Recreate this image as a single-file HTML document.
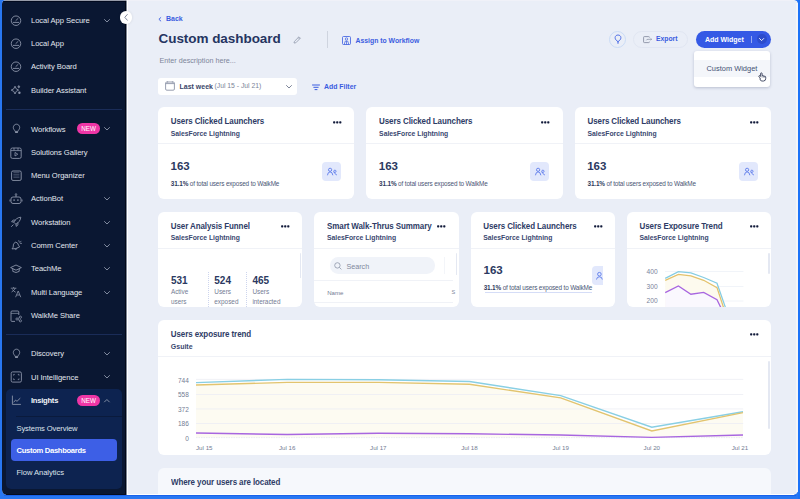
<!DOCTYPE html><html><head><meta charset="utf-8"><style>
*{box-sizing:border-box;margin:0;padding:0}
html,body{width:800px;height:499px;overflow:hidden;background:#2877f2;font-family:"Liberation Sans",sans-serif}
.a{position:absolute}
.t{position:absolute;white-space:nowrap;line-height:1}
.si{position:absolute;left:31px;font-size:7.6px;letter-spacing:-0.05px;color:#e3e7ef;white-space:nowrap;line-height:1}
.card{position:absolute;background:#fff;border-radius:6px}
.ct{position:absolute;font-size:8px;letter-spacing:-0.1px;font-weight:700;color:#2e3c66;white-space:nowrap;line-height:1;transform:scaleY(1.12);transform-origin:0 85%}
.cs{position:absolute;font-size:6.8px;font-weight:700;color:#3a4870;white-space:nowrap;line-height:1}
.hsep{position:absolute;height:1px;background:#f0f2f7}
svg{position:absolute;overflow:visible}
</style></head><body>
<div class="a" style="left:2px;top:0;width:796px;height:495px;background:#eaeef7;border-radius:0 4px 5px 5px;overflow:hidden"></div>
<div class="a" style="left:2px;top:0px;width:124px;height:495px;background:#0a1732;border-radius:4px 0 0 5px"></div>
<div class="a" style="left:4px;top:1px;width:122px;height:1px;background:#020a1f"></div>
<div class="a" style="left:125px;top:0;width:1px;height:495px;background:#020817"></div>
<div class="a" style="left:126px;top:0;width:1px;height:495px;background:#7d8595"></div>
<div class="a" style="left:127px;top:0;width:1px;height:495px;background:#ffffff"></div>
<div class="a" style="left:4px;top:0;width:791px;height:1px;background:rgba(243,244,248,0.6)"></div>
<div class="si" style="top:16.85px">Local App Secure</div>
<svg style="left:10px;top:14.55px" width="12" height="12"><circle cx="6" cy="5.7" r="4.75" fill="none" stroke="#8a93a8" stroke-width="0.9"/><path d="M3.2 7.4 H8.8 M5.9 5.5 L8 3.5" stroke="#8a93a8" stroke-width="0.9" fill="none" stroke-linecap="round"/></svg>
<svg style="left:103.8px;top:18.75px" width="6" height="3.5"><path d="M0.5 0.5 L3.0 3.0 L5.5 0.5" fill="none" stroke="#8f98ad" stroke-width="0.9" stroke-linecap="round" stroke-linejoin="round"/></svg>
<div class="si" style="top:40.15px">Local App</div>
<svg style="left:10px;top:37.85px" width="12" height="12"><circle cx="6" cy="5.7" r="4.75" fill="none" stroke="#8a93a8" stroke-width="0.9"/><path d="M3.2 7.4 H8.8 M5.9 5.5 L8 3.5" stroke="#8a93a8" stroke-width="0.9" fill="none" stroke-linecap="round"/></svg>
<div class="si" style="top:63.45px">Activity Board</div>
<svg style="left:10px;top:61.15px" width="12" height="12"><circle cx="6" cy="5.7" r="4.75" fill="none" stroke="#8a93a8" stroke-width="0.9"/><path d="M3.2 7.4 H8.8 M5.9 5.5 L8 3.5" stroke="#8a93a8" stroke-width="0.9" fill="none" stroke-linecap="round"/></svg>
<div class="si" style="top:86.75px">Builder Assistant</div>
<svg style="left:10px;top:84.45px" width="12" height="12"><path d="M5 2.2 Q5.6 5.5 8.6 6.1 Q5.6 6.7 5 10 Q4.4 6.7 1.2 6.1 Q4.4 5.5 5 2.2Z" fill="none" stroke="#8a93a8" stroke-width="0.9" stroke-linejoin="round"/><path d="M8.8 1 L10.3 2.7 L8.8 4.4 L7.3 2.7Z" fill="#8a93a8" opacity="0.85"/><circle cx="9.4" cy="8.8" r="1.2" fill="#8a93a8"/></svg>
<div class="si" style="top:125.55px">Workflows</div>
<svg style="left:10px;top:123.25px" width="12" height="12"><path d="M5 8.4 C4.8 7.1 3.3 6.3 3.3 4.6 C3.3 2.7 4.7 1.2 6.5 1.2 C8.3 1.2 9.7 2.7 9.7 4.6 C9.7 6.3 8.2 7.1 8 8.4Z" fill="none" stroke="#8a93a8" stroke-width="0.9" stroke-linejoin="round"/><rect x="5.1" y="8.8" width="2.8" height="1.3" rx="0.3" fill="#8a93a8"/></svg>
<svg style="left:103.8px;top:127.45px" width="6" height="3.5"><path d="M0.5 0.5 L3.0 3.0 L5.5 0.5" fill="none" stroke="#8f98ad" stroke-width="0.9" stroke-linecap="round" stroke-linejoin="round"/></svg>
<div class="si" style="top:148.85px">Solutions Gallery</div>
<svg style="left:10px;top:146.55px" width="12" height="12"><rect x="0.8" y="1" width="10.4" height="10.4" rx="1.6" fill="none" stroke="#8a93a8" stroke-width="0.9"/><path d="M0.8 3.6 H11.2 M4 1 V3.6 M8 1 V3.6" stroke="#8a93a8" stroke-width="0.8"/><path d="M5 5.4 L7.8 7.2 L5 9Z" fill="none" stroke="#8a93a8" stroke-width="0.8"/></svg>
<div class="si" style="top:172.15px">Menu Organizer</div>
<svg style="left:10px;top:169.85px" width="12" height="12"><rect x="1.6" y="1" width="9.6" height="9.4" rx="1.3" fill="none" stroke="#8a93a8" stroke-width="0.95"/><path d="M3.4 2.6 H9.4 M3.4 4.3 H9.4 M3.4 6 H9.4 M3.4 7.7 H9.4" stroke="#8a93a8" stroke-width="0.55" opacity="0.8"/><path d="M3.2 9 H9.6" stroke="#050d20" stroke-width="0.8"/></svg>
<div class="si" style="top:195.45px">ActionBot</div>
<svg style="left:10px;top:193.15px" width="12" height="12"><rect x="1" y="4" width="10" height="6.5" rx="2" fill="none" stroke="#8a93a8" stroke-width="0.9"/><path d="M6 4 V1.8" stroke="#8a93a8" stroke-width="0.9"/><circle cx="6" cy="1.4" r="0.8" fill="none" stroke="#8a93a8" stroke-width="0.7"/><rect x="3.4" y="6.4" width="1.4" height="1.4" fill="#8a93a8"/><rect x="7.2" y="6.4" width="1.4" height="1.4" fill="#8a93a8"/><path d="M0 6.5 V8.5 M12 6.5 V8.5" stroke="#8a93a8" stroke-width="0.9"/></svg>
<svg style="left:103.8px;top:197.35px" width="6" height="3.5"><path d="M0.5 0.5 L3.0 3.0 L5.5 0.5" fill="none" stroke="#8f98ad" stroke-width="0.9" stroke-linecap="round" stroke-linejoin="round"/></svg>
<div class="si" style="top:218.75px">Workstation</div>
<svg style="left:10px;top:216.45px" width="12" height="12"><path d="M10.8 1.2 C7.5 1.4 5.2 3.6 3.8 6.2 L5.8 8.2 C8.4 6.8 10.6 4.5 10.8 1.2Z" fill="none" stroke="#8a93a8" stroke-width="0.9" stroke-linejoin="round"/><path d="M4 6 L1.6 5.8 L3.2 4 L5.4 4.2 M6 8 L6.2 10.4 L8 8.8 L7.8 6.6 M3.4 8.6 L1.2 10.8" fill="none" stroke="#8a93a8" stroke-width="0.9" stroke-linejoin="round"/></svg>
<svg style="left:103.8px;top:220.65px" width="6" height="3.5"><path d="M0.5 0.5 L3.0 3.0 L5.5 0.5" fill="none" stroke="#8f98ad" stroke-width="0.9" stroke-linecap="round" stroke-linejoin="round"/></svg>
<div class="si" style="top:242.05px">Comm Center</div>
<svg style="left:10px;top:239.75px" width="12" height="12"><path d="M5.4 2 Q8 2.4 8.5 5.2 L9.6 6.9 Q6 9.2 2 8.9 L3.1 7.3 Q2.8 3.6 5.4 2Z" fill="none" stroke="#8a93a8" stroke-width="0.9" stroke-linejoin="round"/><path d="M4.6 8.9 Q5.8 10.4 7.3 8.3" fill="none" stroke="#8a93a8" stroke-width="0.85"/><path d="M8.8 0.6 L9.2 1.9 M11 1.2 L10 2.4 M11.6 3.4 L10.3 3.4" stroke="#8a93a8" stroke-width="0.75" stroke-linecap="round"/></svg>
<svg style="left:103.8px;top:243.95px" width="6" height="3.5"><path d="M0.5 0.5 L3.0 3.0 L5.5 0.5" fill="none" stroke="#8f98ad" stroke-width="0.9" stroke-linecap="round" stroke-linejoin="round"/></svg>
<div class="si" style="top:265.35px">TeachMe</div>
<svg style="left:10px;top:263.05px" width="12" height="12"><path d="M0.6 4.6 L6 2 L11.4 4.6 L6 7.2Z" fill="none" stroke="#8a93a8" stroke-width="0.9" stroke-linejoin="round"/><path d="M2.8 5.8 V8.4 Q6 10.6 9.2 8.4 V5.8" fill="none" stroke="#8a93a8" stroke-width="0.9"/></svg>
<svg style="left:103.8px;top:267.25px" width="6" height="3.5"><path d="M0.5 0.5 L3.0 3.0 L5.5 0.5" fill="none" stroke="#8f98ad" stroke-width="0.9" stroke-linecap="round" stroke-linejoin="round"/></svg>
<div class="si" style="top:288.65px">Multi Language</div>
<svg style="left:10px;top:286.35px" width="12" height="12"><path d="M0.8 2.2 H6.4 M3.6 1 V2.2 M1.6 6 C3.4 5 4.8 3.4 5.2 2.2 M2.4 3.4 C3 4.6 4.2 5.6 5.6 6.2" fill="none" stroke="#8a93a8" stroke-width="0.8"/><path d="M5.6 11.2 L8.2 5 L10.8 11.2 M6.6 9 H9.8" fill="none" stroke="#8a93a8" stroke-width="0.8"/></svg>
<svg style="left:103.8px;top:290.55px" width="6" height="3.5"><path d="M0.5 0.5 L3.0 3.0 L5.5 0.5" fill="none" stroke="#8f98ad" stroke-width="0.9" stroke-linecap="round" stroke-linejoin="round"/></svg>
<div class="si" style="top:311.95px">WalkMe Share</div>
<svg style="left:10px;top:309.65px" width="12" height="12"><path d="M8.8 5 V2 Q8.8 1 7.8 1 H2 Q1 1 1 2 V10.6 Q1 11.4 2 11.4 H5" fill="none" stroke="#8a93a8" stroke-width="0.9"/><path d="M1 3.4 H8.8" stroke="#8a93a8" stroke-width="0.7"/><circle cx="7" cy="9" r="1.1" fill="none" stroke="#8a93a8" stroke-width="0.8"/><circle cx="10.4" cy="7.2" r="1.1" fill="none" stroke="#8a93a8" stroke-width="0.8"/><circle cx="10.4" cy="10.8" r="1.1" fill="none" stroke="#8a93a8" stroke-width="0.8"/><path d="M8 8.5 L9.4 7.7 M8 9.5 L9.4 10.3" stroke="#8a93a8" stroke-width="0.7"/></svg>
<div class="si" style="top:350.25px">Discovery</div>
<svg style="left:10px;top:347.95px" width="12" height="12"><path d="M5 8.4 C4.8 7.1 3.3 6.3 3.3 4.6 C3.3 2.7 4.7 1.2 6.5 1.2 C8.3 1.2 9.7 2.7 9.7 4.6 C9.7 6.3 8.2 7.1 8 8.4Z" fill="none" stroke="#8a93a8" stroke-width="0.9" stroke-linejoin="round"/><rect x="5.1" y="8.8" width="2.8" height="1.3" rx="0.3" fill="#8a93a8"/></svg>
<svg style="left:103.8px;top:352.15px" width="6" height="3.5"><path d="M0.5 0.5 L3.0 3.0 L5.5 0.5" fill="none" stroke="#8f98ad" stroke-width="0.9" stroke-linecap="round" stroke-linejoin="round"/></svg>
<div class="si" style="top:373.55px">UI Intelligence</div>
<svg style="left:10px;top:371.25px" width="12" height="12"><rect x="1.2" y="0.9" width="10.2" height="10.2" rx="1.4" fill="none" stroke="#8a93a8" stroke-width="0.9"/><path d="M3.6 3.4 V4.6 M3.6 3.4 H4.8 M9 3.4 V4.6 M9 3.4 H7.8 M3.6 8.6 V7.4 M3.6 8.6 H4.8 M9 8.6 V7.4 M9 8.6 H7.8" fill="none" stroke="#8a93a8" stroke-width="0.75"/></svg>
<svg style="left:103.8px;top:375.45px" width="6" height="3.5"><path d="M0.5 0.5 L3.0 3.0 L5.5 0.5" fill="none" stroke="#8f98ad" stroke-width="0.9" stroke-linecap="round" stroke-linejoin="round"/></svg>
<div class="a" style="left:6px;top:109px;width:116px;height:1px;background:#1a2c58"></div>
<div class="a" style="left:6px;top:334px;width:116px;height:1px;background:#1a2c58"></div>
<div class="t" style="left:77px;top:123.3px;width:23px;height:10.6px;border-radius:5.3px;background:#ef36a6;color:#fff;font-size:6.3px;line-height:11.7px;text-align:center">NEW</div>
<div class="a" style="left:6px;top:388.5px;width:116px;height:100.5px;background:#0d2350;border-radius:5px"></div>
<div class="a" style="left:16px;top:416px;width:106px;height:1px;background:#0a1a3c"></div>
<div class="si" style="top:396.8px;font-weight:700;letter-spacing:-0.25px;color:#f2f4f8">Insights</div>
<svg style="left:10px;top:394.2px" width="12" height="12"><path d="M2.4 1.6 V10.4 H10.9" fill="none" stroke="#8a93a8" stroke-width="0.9"/><path d="M3.9 8 L5.5 6.1 L7 7.3 L10 4.4" fill="none" stroke="#8a93a8" stroke-width="0.9" stroke-linejoin="round" stroke-linecap="round"/></svg>
<div class="t" style="left:77px;top:394.9px;width:23px;height:10.9px;border-radius:5.45px;background:#ef36a6;color:#fff;font-size:6.3px;line-height:12.0px;text-align:center">NEW</div>
<svg style="left:103.9px;top:398.5px" width="5.8" height="3.4"><path d="M0.5 2.9 L2.9 0.5 L5.3 2.9" fill="none" stroke="#8f98ad" stroke-width="0.9" stroke-linecap="round" stroke-linejoin="round"/></svg>
<div class="si" style="left:16.5px;top:424.8px;letter-spacing:-0.12px;color:#dfe3ec">Systems Overview</div>
<div class="a" style="left:11px;top:439.1px;width:106px;height:21.9px;background:#3d5fe6;border-radius:4px"></div>
<div class="si" style="left:16.5px;top:447.1px;color:#ffffff;letter-spacing:-0.3px;font-weight:700">Custom Dashboards</div>
<div class="si" style="left:16.5px;top:469.1px;color:#dfe3ec">Flow Analytics</div>
<div class="a" style="left:119.7px;top:10.9px;width:12.8px;height:12.8px;border-radius:6.4px;background:#fff;box-shadow:0 0 3px rgba(0,0,0,0.10)"></div>
<svg style="left:124px;top:13.9px" width="4" height="7"><path d="M3.3 0.5 L0.8 3.35 L3.3 6.2" fill="none" stroke="#707a90" stroke-width="0.9" stroke-linecap="round"/></svg>
<svg style="left:158.2px;top:16.6px" width="4" height="5"><path d="M2.8 0.6 L0.9 2.3 L2.8 4" fill="none" stroke="#3a5ce0" stroke-width="0.9" stroke-linecap="round"/></svg>
<div class="t" style="left:166px;top:14.5px;font-size:7px;font-weight:700;color:#3a5ce0">Back</div>
<div class="t" style="left:158.5px;top:31.5px;font-size:13.5px;font-weight:700;color:#253461;letter-spacing:-0.05px">Custom dashboard</div>
<svg style="left:293.3px;top:35.6px" width="9" height="8"><path d="M1 7 L1.4 5.4 L6 0.8 L7.4 2.2 L2.8 6.8Z M5.2 1.6 L6.6 3" fill="none" stroke="#9aa1b3" stroke-width="0.9" stroke-linejoin="round"/></svg>
<div class="a" style="left:327px;top:31px;width:1px;height:17px;background:#cfd4df"></div>
<svg style="left:342px;top:36.3px" width="9" height="9"><rect x="0.5" y="0.5" width="8" height="8" rx="1" fill="none" stroke="#3a5ce0" stroke-width="0.8"/><circle cx="4.5" cy="3" r="1.2" fill="none" stroke="#3a5ce0" stroke-width="0.7"/><path d="M2.2 8.5 L3.2 5.2 H5.8 L6.8 8.5 M4.5 5.2 V8.5" fill="none" stroke="#3a5ce0" stroke-width="0.7"/></svg>
<div class="t" style="left:355.5px;top:37.5px;font-size:6.85px;font-weight:700;color:#3a5ce0">Assign to Workflow</div>
<div class="t" style="left:159.5px;top:56.5px;font-size:7.2px;color:#7d8599">Enter description here...</div>
<div class="a" style="left:158px;top:78px;width:139px;height:16.5px;background:#fff;border-radius:3px"></div>
<svg style="left:165.3px;top:81.2px" width="10" height="10"><rect x="0.6" y="1" width="8.8" height="8.2" rx="1.2" fill="none" stroke="#7e879c" stroke-width="0.8"/><path d="M0.6 2.6 H9.4" stroke="#7e879c" stroke-width="0.8"/><path d="M2.6 0.3 V1.6 M7.4 0.3 V1.6" stroke="#7e879c" stroke-width="0.7"/></svg>
<div class="t" style="left:179.5px;top:83px;font-size:7px;font-weight:700;color:#3a4669">Last week</div>
<div class="t" style="left:214.5px;top:83px;font-size:6.8px;color:#7d8599">(Jul 15 - Jul 21)</div>
<svg style="left:286px;top:84.8px" width="6" height="3.5"><path d="M0.5 0.5 L3.0 3.0 L5.5 0.5" fill="none" stroke="#6d768c" stroke-width="0.9" stroke-linecap="round" stroke-linejoin="round"/></svg>
<svg style="left:311.5px;top:83.5px" width="8" height="7"><path d="M0.5 1 H7.5 M1.8 3.3 H6.2 M3 5.6 H5" stroke="#3a5ce0" stroke-width="1" stroke-linecap="round"/></svg>
<div class="t" style="left:324px;top:83.6px;font-size:6.9px;font-weight:700;color:#3a5ce0">Add Filter</div>
<div class="a" style="left:609px;top:30.6px;width:17px;height:17.2px;border-radius:8.6px;border:0.8px solid #cbdcf6"></div>
<svg style="left:613px;top:34px" width="10" height="11"><path d="M5 7.6 C3.4 6.6 2.1 5.4 2.1 3.7 C2.1 2.1 3.4 1 5 1 C6.6 1 7.9 2.1 7.9 3.7 C7.9 5.4 6.6 6.6 5 7.6Z" fill="none" stroke="#4d6de6" stroke-width="0.95" stroke-linejoin="round"/><path d="M5 7.6 V9.2" stroke="#4d6de6" stroke-width="1.2" stroke-linecap="round"/></svg>
<div class="a" style="left:632.5px;top:30.6px;width:55.5px;height:17.2px;border-radius:8.6px;border:0.8px solid #e1e6f2"></div>
<svg style="left:643px;top:35.6px" width="10" height="8"><path d="M6.4 1.6 V1.3 Q6.4 0.6 5.7 0.6 H1.3 Q0.6 0.6 0.6 1.3 V5.9 Q0.6 6.6 1.3 6.6 H5.7 Q6.4 6.6 6.4 5.9 V5.6" fill="none" stroke="#8a91a4" stroke-width="0.9"/><path d="M3.2 4.4 Q3.6 3.3 5 3.3 H8.6 M7.6 2.4 L8.6 3.3 L7.6 4.2" fill="none" stroke="#8a91a4" stroke-width="0.75"/></svg>
<div class="t" style="left:656px;top:36px;font-size:6.8px;font-weight:700;color:#3a5ce0">Export</div>
<div class="a" style="left:696px;top:30.5px;width:75px;height:17px;border-radius:8.5px;background:#3559e5"></div>
<div class="t" style="left:705px;top:35.8px;font-size:7px;font-weight:700;color:#fff">Add Widget</div>
<div class="a" style="left:751.3px;top:35.5px;width:0.9px;height:7px;background:#98abf2"></div>
<div class="a" style="left:756.8px;top:34.2px;width:9.8px;height:9.8px;border-radius:4.9px;background:#2d4ccc"></div>
<svg style="left:759.4px;top:38.1px" width="5.2" height="3.1"><path d="M0.5 0.5 L2.6 2.6 L4.7 0.5" fill="none" stroke="#ffffff" stroke-width="0.9" stroke-linecap="round" stroke-linejoin="round"/></svg>
<div class="a" style="left:694px;top:50.5px;width:76px;height:36px;background:#fff;border-radius:3px;box-shadow:0 1px 3px rgba(40,50,90,0.25)"></div>
<div class="a" style="left:694px;top:59.9px;width:76px;height:17px;background:#f4f6fa"></div>
<div class="t" style="left:706.5px;top:65px;font-size:7.45px;color:#465274">Custom Widget</div>
<svg style="left:757.6px;top:71.6px" width="10" height="10"><g transform="scale(0.82)"><path d="M2.6 7.2 L1.3 6 Q0.6 5.3 1.2 4.7 Q1.9 4.1 2.6 4.8 L3.2 5.4 V2 Q3.2 1 4.1 1 Q5 1 5 2 V4.4 Q6 4 6.6 4.7 Q7.6 4.4 8 5.2 Q9.2 5 9.4 6.2 V8 Q9.4 10.8 6.8 11 H5 Q3.6 11 2.6 9.6Z" fill="#fff" stroke="#2a3350" stroke-width="1.05" stroke-linejoin="round"/><path d="M5 4.6 V6.8 M6.6 4.8 V6.8 M8 5.3 V6.8" stroke="#2a3350" stroke-width="0.6"/></g></svg>
<div class="card" style="left:158px;top:107px;width:196.3px;height:92px"></div>
<div class="ct" style="left:170.8px;top:118.3px">Users Clicked Launchers</div>
<div class="cs" style="left:170.8px;top:130.6px">SalesForce Lightning</div>
<svg style="left:333px;top:120.8px" width="9" height="3"><rect x="0.1" y="0.2" width="2.2" height="2.2" rx="0.7" fill="#111a3a"/><rect x="3.15" y="0.2" width="2.2" height="2.2" rx="0.7" fill="#111a3a"/><rect x="6.199999999999999" y="0.2" width="2.2" height="2.2" rx="0.7" fill="#111a3a"/></svg>
<div class="hsep" style="left:158px;top:143px;width:196.3px"></div>
<div class="t" style="left:170.5px;top:160.5px;font-size:11.5px;font-weight:700;color:#2b3961">163</div>
<div class="t" style="left:170.8px;top:181px;font-size:6.4px;letter-spacing:-0.15px;color:#4a5675"><b style="color:#2f3b5e">31.1%</b> of total users exposed to WalkMe</div>
<div class="a" style="left:322px;top:162.3px;width:19px;height:19px;border-radius:4px;background:#e2e8fc"></div>
<svg style="left:327px;top:168px" width="11" height="8"><circle cx="3.1" cy="1.8" r="1.6" fill="none" stroke="#5675ea" stroke-width="0.85"/><path d="M0.5 6.9 Q0.8 3.9 3.1 3.9 Q5.4 3.9 5.8 6.9" fill="none" stroke="#5675ea" stroke-width="0.85" stroke-linecap="round"/><circle cx="7.9" cy="3.3" r="1.15" fill="none" stroke="#5675ea" stroke-width="0.8"/><path d="M6.9 4.2 Q7.6 5.9 9.6 6.9" fill="none" stroke="#5675ea" stroke-width="0.8" stroke-linecap="round"/></svg>
<div class="card" style="left:366.3px;top:107px;width:196.3px;height:92px"></div>
<div class="ct" style="left:379.1px;top:118.3px">Users Clicked Launchers</div>
<div class="cs" style="left:379.1px;top:130.6px">SalesForce Lightning</div>
<svg style="left:541.3px;top:120.8px" width="9" height="3"><rect x="0.1" y="0.2" width="2.2" height="2.2" rx="0.7" fill="#111a3a"/><rect x="3.15" y="0.2" width="2.2" height="2.2" rx="0.7" fill="#111a3a"/><rect x="6.199999999999999" y="0.2" width="2.2" height="2.2" rx="0.7" fill="#111a3a"/></svg>
<div class="hsep" style="left:366.3px;top:143px;width:196.3px"></div>
<div class="t" style="left:378.8px;top:160.5px;font-size:11.5px;font-weight:700;color:#2b3961">163</div>
<div class="t" style="left:379.1px;top:181px;font-size:6.4px;letter-spacing:-0.15px;color:#4a5675"><b style="color:#2f3b5e">31.1%</b> of total users exposed to WalkMe</div>
<div class="a" style="left:530.3px;top:162.3px;width:19px;height:19px;border-radius:4px;background:#e2e8fc"></div>
<svg style="left:535.3px;top:168px" width="11" height="8"><circle cx="3.1" cy="1.8" r="1.6" fill="none" stroke="#5675ea" stroke-width="0.85"/><path d="M0.5 6.9 Q0.8 3.9 3.1 3.9 Q5.4 3.9 5.8 6.9" fill="none" stroke="#5675ea" stroke-width="0.85" stroke-linecap="round"/><circle cx="7.9" cy="3.3" r="1.15" fill="none" stroke="#5675ea" stroke-width="0.8"/><path d="M6.9 4.2 Q7.6 5.9 9.6 6.9" fill="none" stroke="#5675ea" stroke-width="0.8" stroke-linecap="round"/></svg>
<div class="card" style="left:574.7px;top:107px;width:196.3px;height:92px"></div>
<div class="ct" style="left:587.5px;top:118.3px">Users Clicked Launchers</div>
<div class="cs" style="left:587.5px;top:130.6px">SalesForce Lightning</div>
<svg style="left:749.7px;top:120.8px" width="9" height="3"><rect x="0.1" y="0.2" width="2.2" height="2.2" rx="0.7" fill="#111a3a"/><rect x="3.15" y="0.2" width="2.2" height="2.2" rx="0.7" fill="#111a3a"/><rect x="6.199999999999999" y="0.2" width="2.2" height="2.2" rx="0.7" fill="#111a3a"/></svg>
<div class="hsep" style="left:574.7px;top:143px;width:196.3px"></div>
<div class="t" style="left:587.2px;top:160.5px;font-size:11.5px;font-weight:700;color:#2b3961">163</div>
<div class="t" style="left:587.5px;top:181px;font-size:6.4px;letter-spacing:-0.15px;color:#4a5675"><b style="color:#2f3b5e">31.1%</b> of total users exposed to WalkMe</div>
<div class="a" style="left:738.7px;top:162.3px;width:19px;height:19px;border-radius:4px;background:#e2e8fc"></div>
<svg style="left:743.7px;top:168px" width="11" height="8"><circle cx="3.1" cy="1.8" r="1.6" fill="none" stroke="#5675ea" stroke-width="0.85"/><path d="M0.5 6.9 Q0.8 3.9 3.1 3.9 Q5.4 3.9 5.8 6.9" fill="none" stroke="#5675ea" stroke-width="0.85" stroke-linecap="round"/><circle cx="7.9" cy="3.3" r="1.15" fill="none" stroke="#5675ea" stroke-width="0.8"/><path d="M6.9 4.2 Q7.6 5.9 9.6 6.9" fill="none" stroke="#5675ea" stroke-width="0.8" stroke-linecap="round"/></svg>
<div class="card" style="left:158px;top:211.5px;width:144.25px;height:95.5px;overflow:hidden"></div>
<div class="ct" style="left:170.8px;top:223.1px">User Analysis Funnel</div>
<div class="cs" style="left:170.8px;top:234.9px">SalesForce Lightning</div>
<svg style="left:281px;top:225px" width="9" height="3"><rect x="0.1" y="0.2" width="2.2" height="2.2" rx="0.7" fill="#111a3a"/><rect x="3.15" y="0.2" width="2.2" height="2.2" rx="0.7" fill="#111a3a"/><rect x="6.199999999999999" y="0.2" width="2.2" height="2.2" rx="0.7" fill="#111a3a"/></svg>
<div class="hsep" style="left:158px;top:247.5px;width:144.25px"></div>
<div class="a" style="left:299.5px;top:252.5px;width:1.6px;height:25px;background:#e4e8f2;border-radius:1px"></div>
<div class="card" style="left:314.25px;top:211.5px;width:144.25px;height:95.5px;overflow:hidden"></div>
<div class="ct" style="left:327.05px;top:223.1px">Smart Walk-Thrus Summary</div>
<div class="cs" style="left:327.05px;top:234.9px">SalesForce Lightning</div>
<svg style="left:437.2px;top:225px" width="9" height="3"><rect x="0.1" y="0.2" width="2.2" height="2.2" rx="0.7" fill="#111a3a"/><rect x="3.15" y="0.2" width="2.2" height="2.2" rx="0.7" fill="#111a3a"/><rect x="6.199999999999999" y="0.2" width="2.2" height="2.2" rx="0.7" fill="#111a3a"/></svg>
<div class="hsep" style="left:314.25px;top:247.5px;width:144.25px"></div>
<div class="a" style="left:455.75px;top:252.5px;width:1.6px;height:22px;background:#e4e8f2;border-radius:1px"></div>
<div class="card" style="left:470.5px;top:211.5px;width:144.25px;height:95.5px;overflow:hidden"></div>
<div class="ct" style="left:483.3px;top:223.1px">Users Clicked Launchers</div>
<div class="cs" style="left:483.3px;top:234.9px">SalesForce Lightning</div>
<svg style="left:593.5px;top:225px" width="9" height="3"><rect x="0.1" y="0.2" width="2.2" height="2.2" rx="0.7" fill="#111a3a"/><rect x="3.15" y="0.2" width="2.2" height="2.2" rx="0.7" fill="#111a3a"/><rect x="6.199999999999999" y="0.2" width="2.2" height="2.2" rx="0.7" fill="#111a3a"/></svg>
<div class="hsep" style="left:470.5px;top:247.5px;width:144.25px"></div>
<div class="card" style="left:626.75px;top:211.5px;width:144.25px;height:95.5px;overflow:hidden"></div>
<div class="ct" style="left:639.55px;top:223.1px">Users Exposure Trend</div>
<div class="cs" style="left:639.55px;top:234.9px">SalesForce Lightning</div>
<svg style="left:749.8px;top:225px" width="9" height="3"><rect x="0.1" y="0.2" width="2.2" height="2.2" rx="0.7" fill="#111a3a"/><rect x="3.15" y="0.2" width="2.2" height="2.2" rx="0.7" fill="#111a3a"/><rect x="6.199999999999999" y="0.2" width="2.2" height="2.2" rx="0.7" fill="#111a3a"/></svg>
<div class="hsep" style="left:626.75px;top:247.5px;width:144.25px"></div>
<div class="a" style="left:768.25px;top:252.5px;width:1.6px;height:21px;background:#e4e8f2;border-radius:1px"></div>
<div class="t" style="left:170.9px;top:275.7px;font-size:10px;font-weight:700;color:#2b3961">531</div>
<div class="t" style="left:170.9px;top:289.2px;font-size:6.4px;color:#737c94">Active</div>
<div class="t" style="left:170.9px;top:298.6px;font-size:6.4px;color:#737c94">users</div>
<div class="t" style="left:214.3px;top:275.7px;font-size:10px;font-weight:700;color:#2b3961">524</div>
<div class="t" style="left:214.3px;top:289.2px;font-size:6.4px;color:#737c94">Users</div>
<div class="t" style="left:214.3px;top:298.6px;font-size:6.4px;color:#737c94">exposed</div>
<div class="t" style="left:252.4px;top:275.7px;font-size:10px;font-weight:700;color:#2b3961">465</div>
<div class="t" style="left:252.4px;top:289.2px;font-size:6.4px;color:#737c94">Users</div>
<div class="t" style="left:252.4px;top:298.6px;font-size:6.4px;color:#737c94">interacted</div>
<div class="a" style="left:207.7px;top:272px;width:0;height:35px;border-left:1px dotted #cdd5ee"></div>
<div class="a" style="left:245.8px;top:272px;width:0;height:35px;border-left:1px dotted #cdd5ee"></div>
<div class="a" style="left:329.8px;top:257.2px;width:105.4px;height:16.5px;border-radius:8.25px;background:#f0f3f9"></div>
<svg style="left:334px;top:261.5px" width="8" height="8"><circle cx="3.4" cy="3.4" r="2.7" fill="none" stroke="#8d95a8" stroke-width="0.8"/><path d="M5.4 5.4 L7.4 7.4" stroke="#8d95a8" stroke-width="0.8"/></svg>
<div class="t" style="left:346.4px;top:263.3px;font-size:7.2px;color:#7f879c">Search</div>
<div class="a" style="left:444.3px;top:257px;width:0.6px;height:17px;background:#f3f5f9"></div>
<div class="hsep" style="left:314.25px;top:280.4px;width:139px"></div>
<div class="t" style="left:327.2px;top:290px;font-size:6.1px;color:#737c94">Name</div>
<div class="t" style="left:451.5px;top:290.3px;font-size:5.6px;color:#7d869b">S</div>
<div class="hsep" style="left:314.25px;top:301.5px;width:139px"></div>
<div class="t" style="left:483.5px;top:264.5px;font-size:11.5px;font-weight:700;color:#2b3961">163</div>
<div class="t" style="left:483.7px;top:284.6px;font-size:6.4px;letter-spacing:-0.15px;color:#4a5675"><b style="color:#2f3b5e">31.1%</b> of total users exposed to WalkMe</div>
<div class="a" style="left:592px;top:266.2px;width:10.5px;height:18.5px;border-radius:4px 0 0 4px;background:#e2e8fc"></div>
<svg style="left:595.5px;top:272px" width="7" height="8"><circle cx="3.4" cy="2.2" r="1.8" fill="none" stroke="#4d6ee8" stroke-width="0.8"/><path d="M0.5 7.5 Q0.8 4.8 3.4 4.8 Q6 4.8 6.3 7.5" fill="none" stroke="#4d6ee8" stroke-width="0.8"/></svg>
<div class="a" style="left:485px;top:292px;width:107px;height:1px;background:#d5ddf7"></div>
<div class="t" style="left:646.6px;top:269.0px;font-size:6.6px;color:#7a839a">400</div>
<div class="t" style="left:646.6px;top:284.0px;font-size:6.6px;color:#7a839a">300</div>
<div class="t" style="left:646.6px;top:298.3px;font-size:6.6px;color:#7a839a">200</div>
<svg style="left:0;top:0" width="800" height="499"><defs><clipPath id="c24"><rect x="626.75" y="248" width="144.25" height="59"/></clipPath></defs><g clip-path="url(#c24)"><line x1="665" y1="271.5" x2="743.4" y2="271.5" stroke="#eef1f8" stroke-width="0.8"/><line x1="665" y1="286.5" x2="743.4" y2="286.5" stroke="#eef1f8" stroke-width="0.8"/><line x1="665" y1="301" x2="743.4" y2="301" stroke="#eef1f8" stroke-width="0.8"/><polygon points="665.2,280.3 678.4,274.4 690.9,275.9 703.7,280.3 717,287.6 725,312 665.2,312" fill="#fdfaee"/><polygon points="665.2,292.7 678.4,286 690.9,294.2 703.7,292.4 717,299.7 723,312 665.2,312" fill="#faf8fe"/><polyline points="665.2,278.3 678.4,271.7 690.9,272.8 703.7,277.5 717,283.2 727,312" fill="none" stroke="#86cde3" stroke-width="1.3"/><polyline points="665.2,280.3 678.4,274.4 690.9,275.9 703.7,280.3 717,287.6 725,312" fill="none" stroke="#e3c26c" stroke-width="1.3"/><polyline points="665.2,292.7 678.4,286 690.9,294.2 703.7,292.4 717,299.7 723,312" fill="none" stroke="#a866e0" stroke-width="1.3"/></g></svg>
<div class="card" style="left:158px;top:319.5px;width:613px;height:135.5px"></div>
<div class="ct" style="left:170.8px;top:330.5px">Users exposure trend</div>
<div class="cs" style="left:170.8px;top:342.6px;font-size:7px">Gsuite</div>
<svg style="left:750px;top:333px" width="9" height="3"><rect x="0.1" y="0.2" width="2.2" height="2.2" rx="0.7" fill="#111a3a"/><rect x="3.15" y="0.2" width="2.2" height="2.2" rx="0.7" fill="#111a3a"/><rect x="6.199999999999999" y="0.2" width="2.2" height="2.2" rx="0.7" fill="#111a3a"/></svg>
<div class="hsep" style="left:158px;top:355.8px;width:613px"></div>
<div class="a" style="left:768px;top:361px;width:1.6px;height:68px;background:#e4e8f2;border-radius:1px"></div>
<div class="t" style="left:150px;width:38.8px;text-align:right;top:377.5px;font-size:6.5px;color:#737c94">744</div>
<div class="t" style="left:150px;width:38.8px;text-align:right;top:392.3px;font-size:6.5px;color:#737c94">558</div>
<div class="t" style="left:150px;width:38.8px;text-align:right;top:406.7px;font-size:6.5px;color:#737c94">372</div>
<div class="t" style="left:150px;width:38.8px;text-align:right;top:420.7px;font-size:6.5px;color:#737c94">186</div>
<div class="t" style="left:150px;width:38.8px;text-align:right;top:435.5px;font-size:6.5px;color:#737c94">0</div>
<div class="t" style="left:196px;top:444.6px;font-size:6.2px;color:#737c94">Jul 15</div>
<div class="t" style="left:267.2px;width:40px;text-align:center;top:444.6px;font-size:6.2px;color:#737c94">Jul 16</div>
<div class="t" style="left:358.3px;width:40px;text-align:center;top:444.6px;font-size:6.2px;color:#737c94">Jul 17</div>
<div class="t" style="left:449.5px;width:40px;text-align:center;top:444.6px;font-size:6.2px;color:#737c94">Jul 18</div>
<div class="t" style="left:540.7px;width:40px;text-align:center;top:444.6px;font-size:6.2px;color:#737c94">Jul 19</div>
<div class="t" style="left:631.8px;width:40px;text-align:center;top:444.6px;font-size:6.2px;color:#737c94">Jul 20</div>
<div class="t" style="left:720px;width:40px;text-align:center;top:444.6px;font-size:6.2px;color:#737c94">Jul 21</div>
<svg style="left:0;top:0" width="800" height="499"><polygon points="196,385 287.2,382.4 378.3,382.4 469.5,384.3 560.7,397.9 651.8,431 743,412.6 743,437.6 196,437.6" fill="#fdfbf2"/><line x1="196" y1="379.4" x2="743.2" y2="379.4" stroke="#eceef4" stroke-width="0.8"/><line x1="196" y1="394.5" x2="743.2" y2="394.5" stroke="#eceef4" stroke-width="0.8"/><line x1="196" y1="408.9" x2="743.2" y2="408.9" stroke="#eceef4" stroke-width="0.8"/><line x1="196" y1="423.5" x2="743.2" y2="423.5" stroke="#eceef4" stroke-width="0.8"/><line x1="196" y1="437.6" x2="743.2" y2="437.6" stroke="#e3e7f0" stroke-width="0.8" stroke-dasharray="1.5 1"/><polyline points="196,382.6 287.2,379.4 378.3,379.8 469.5,381.5 560.7,395.6 651.8,427.2 743,411.8" fill="none" stroke="#89cfe4" stroke-width="1.4"/><polyline points="196,385 287.2,382.4 378.3,382.4 469.5,384.3 560.7,397.9 651.8,431 743,412.6" fill="none" stroke="#e2c46f" stroke-width="1.4"/><polyline points="196,433 287.2,434.5 378.3,433.3 469.5,433.8 560.7,435 651.8,437.4 743,435" fill="none" stroke="#a866e0" stroke-width="1.4"/></svg>
<div class="card" style="left:158px;top:467.6px;width:613px;height:40px;background:#f6f8fc"></div>
<div class="ct" style="left:171px;top:478.8px;font-size:8px">Where your users are located</div>
<div class="a" style="left:128px;top:494px;width:666px;height:1px;background:#ffffff"></div>
<div class="a" style="left:6px;top:494px;width:120px;height:1px;background:#050c1f"></div>
<svg style="left:0;top:0" width="800" height="499"><path fill-rule="evenodd" fill="#2877f2" d="M0 0 H800 V499 H0Z M6 0 H794 Q798 0 798 4 V491 Q798 495 794 495 H7 Q2 495 2 490 V4 Q2 0 6 0Z"/></svg>
<div class="a" style="left:4px;top:495px;width:792px;height:1px;background:#1862ec"></div>
<div class="a" style="left:796px;top:3px;width:2px;height:489px;background:#f4f5f9"></div>
<div class="a" style="left:798px;top:0;width:2px;height:499px;background:#1c72f8"></div>
</body></html>
